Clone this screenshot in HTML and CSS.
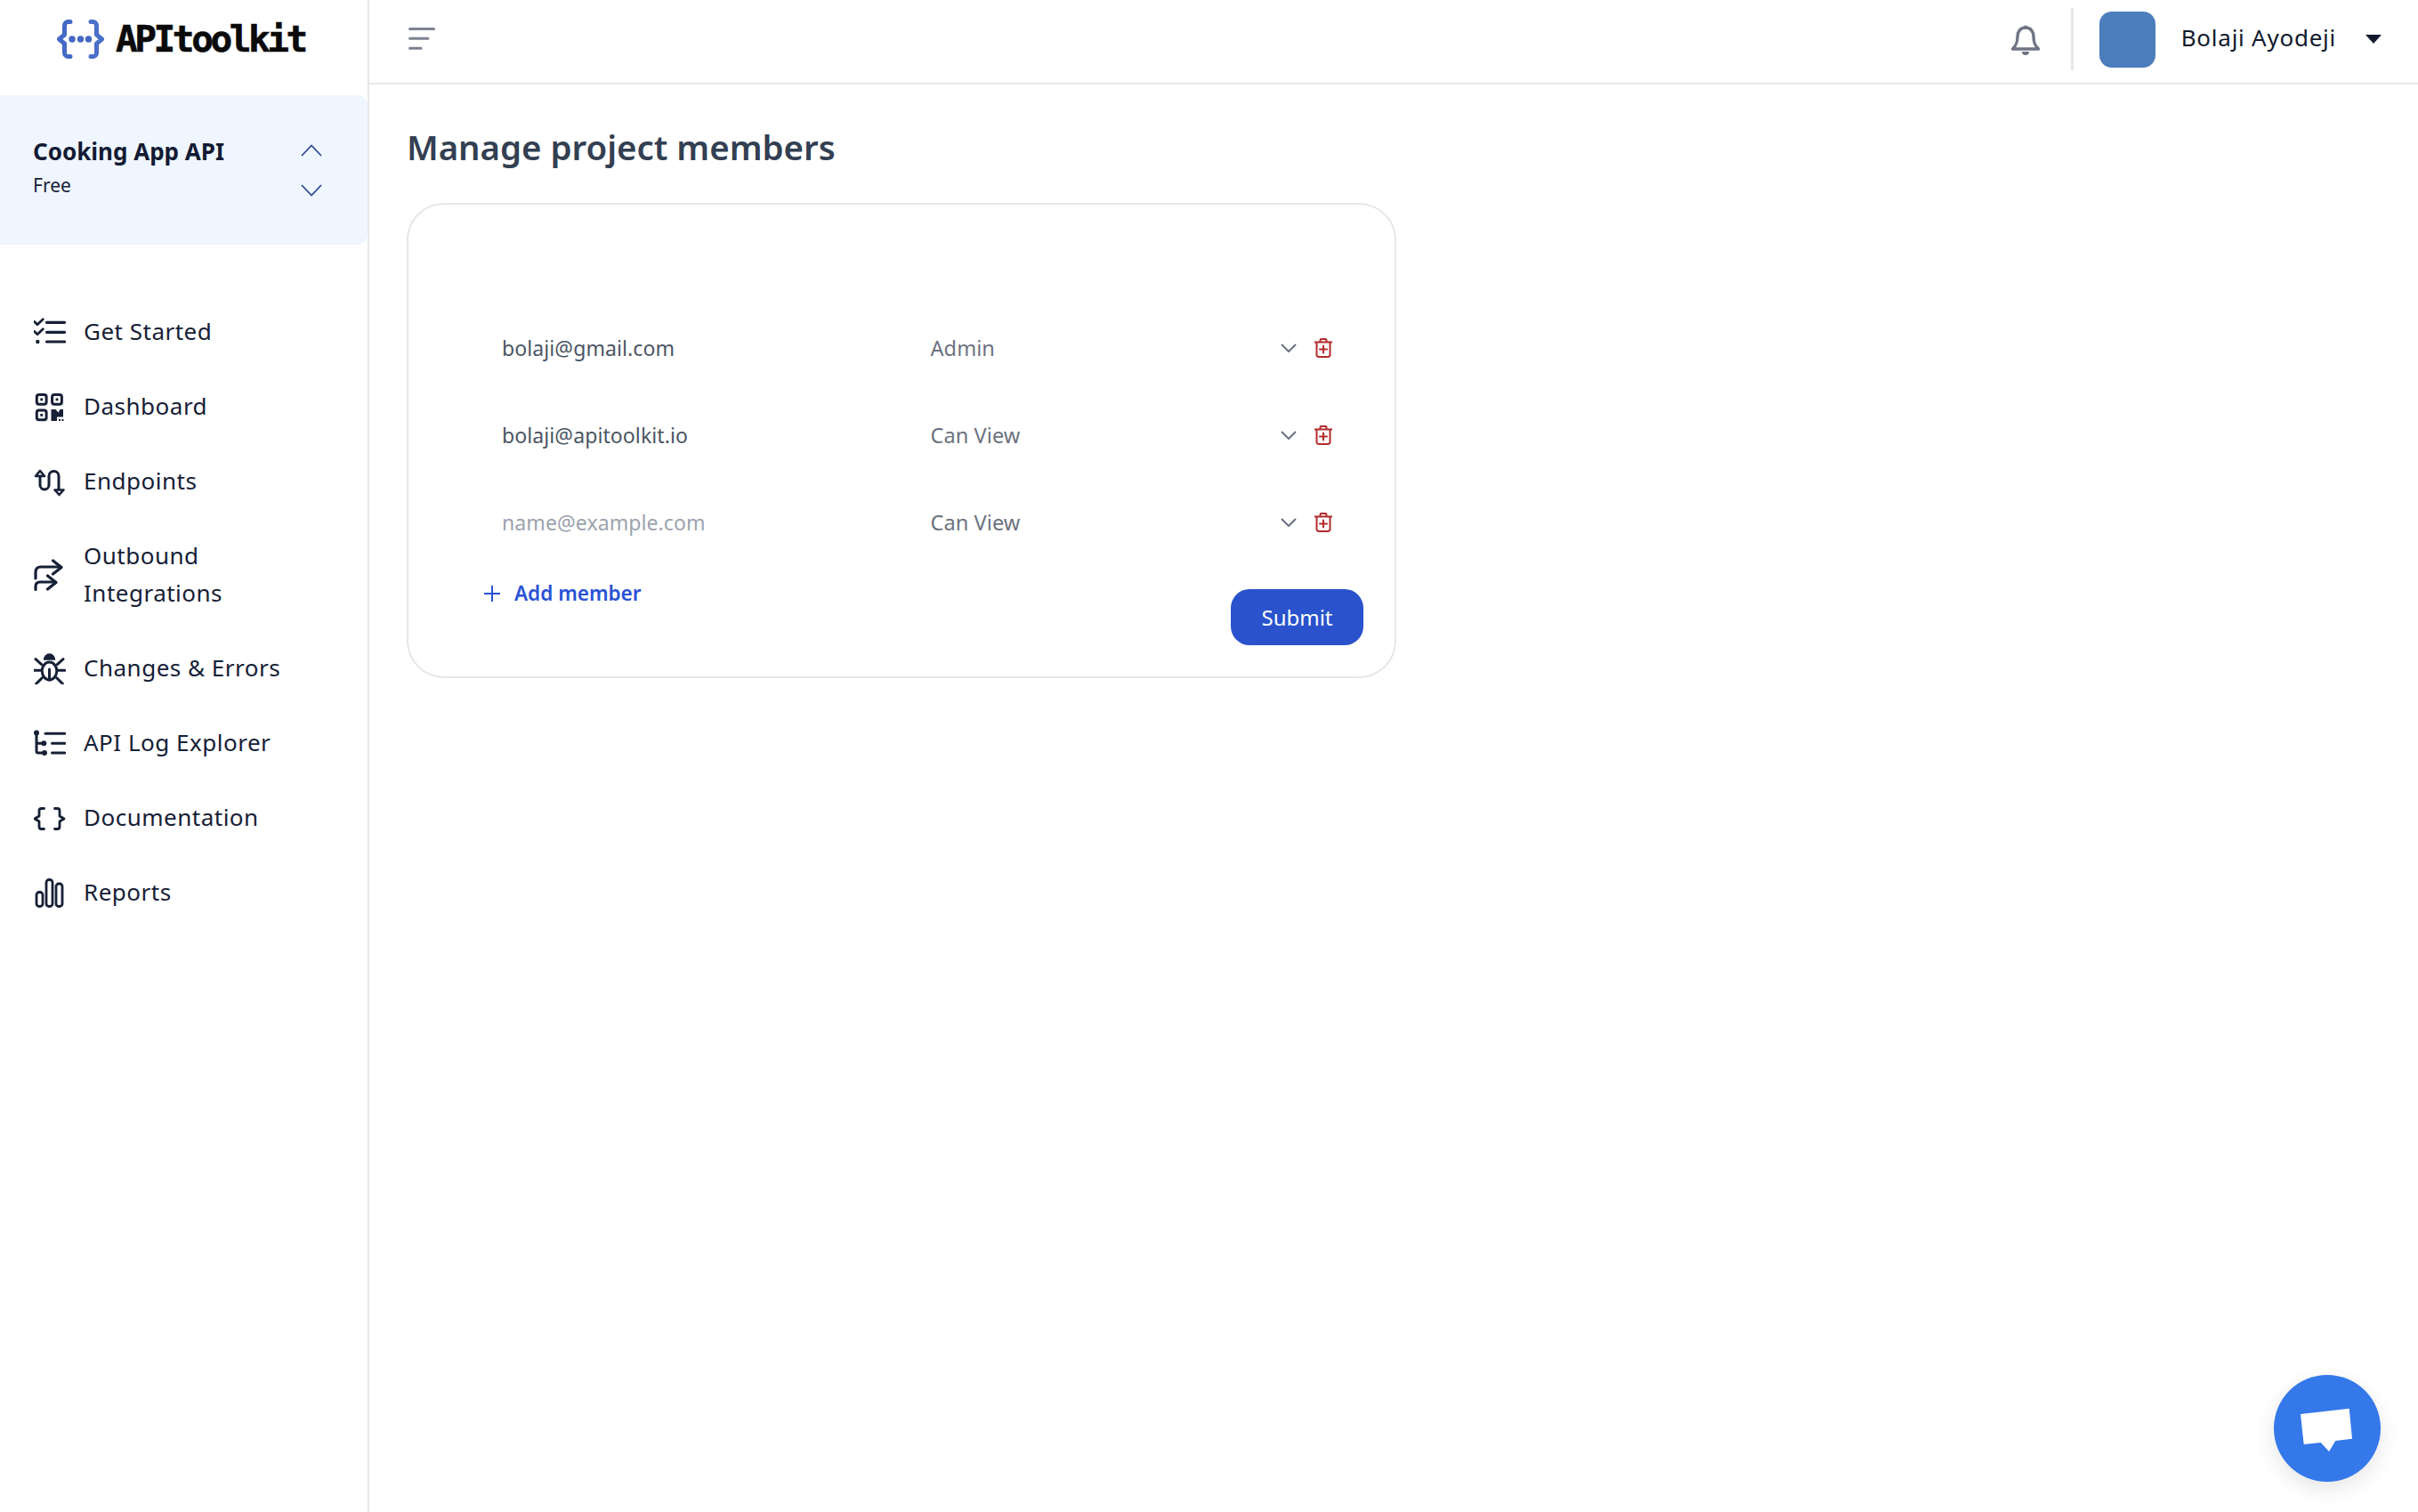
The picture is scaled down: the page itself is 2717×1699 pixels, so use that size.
FILE: index.html
```html
<!DOCTYPE html>
<html lang="en">
<head>
    <meta charset="UTF-8">
    <meta name="viewport" content="width=device-width, initial-scale=1.0">
    <title>Manage project members</title>
    <link rel="stylesheet" href="styles.css">
</head>
<body>
    <aside class="sidebar">
        <div class="logo">
            <svg class="logo-mark" viewBox="0 0 53 44" fill="none">
                <path d="M15 2.500h-2.500a4 4 0 0 0-4 4V17l-6 5 6 5v10.500a4 4 0 0 0 4 4H15" stroke="#4469c6" stroke-width="5" stroke-linecap="round" stroke-linejoin="round"/>
                <path d="M38 2.500h2.500a4 4 0 0 1 4 4V17l6 5-6 5v10.500a4 4 0 0 1-4 4H38" stroke="#4a70ca" stroke-width="5" stroke-linecap="round" stroke-linejoin="round"/>
                <circle cx="17" cy="22" r="3.700" fill="#4267c4"/>
                <circle cx="26.500" cy="22" r="3.700" fill="#4267c4"/>
                <circle cx="35.500" cy="22" r="3.700" fill="#4267c4"/>
            </svg>
            <span class="logo-text">APItoolkit</span>
        </div>

        <div class="project">
            <div class="project-info">
                <div class="project-name">Cooking App API</div>
                <div class="project-plan">Free</div>
            </div>
            <div class="project-arrows">
                <svg viewBox="0 0 24 14" fill="none"><path d="M1 13 12 1.500 23 13" stroke="#2f4a8f" stroke-width="1.800"/></svg>
                <svg viewBox="0 0 24 14" fill="none"><path d="M1 1 12 12.500 23 1" stroke="#2f4a8f" stroke-width="1.800"/></svg>
            </div>
        </div>

        <nav class="nav">
            <a class="nav-item">
                <svg class="nav-icon" viewBox="0 0 36 36">
                    <path d="M14.500 7.300h20M14.500 18.300h20M14.500 29h20" stroke-width="3.200"/>
                    <path d="M.7 6.500 4 9.700 10.300 3.800M.7 17.500 4 20.700 10.300 14.800" stroke-width="2.800"/>
                    <circle class="solid" cx="4.300" cy="29" r="2.200"/>
                </svg>
                <span>Get Started</span>
            </a>
            <a class="nav-item">
                <svg class="nav-icon" viewBox="0 0 36 36">
                    <rect x="3.300" y="4.500" width="10.800" height="10.800" rx="2.500" stroke-width="3"/>
                    <rect x="20.600" y="4.500" width="10.800" height="10.800" rx="2.500" stroke-width="3"/>
                    <rect x="3.300" y="22" width="10.800" height="10.800" rx="2.500" stroke-width="3"/>
                    <rect class="solid" x="7.300" y="8.500" width="2.800" height="2.800"/>
                    <rect class="solid" x="24.600" y="8.500" width="2.800" height="2.800"/>
                    <rect class="solid" x="7.300" y="26" width="2.800" height="2.800"/>
                    <path class="solid" d="M19.500 21h5l3 3.500 2-3.500h3.500v8.500h-7V34h-6.500z"/>
                    <rect class="solid" x="28" y="32" width="2" height="2"/>
                    <rect class="solid" x="31.500" y="32" width="2" height="2"/>
                </svg>
                <span>Dashboard</span>
            </a>
            <a class="nav-item">
                <svg class="nav-icon" viewBox="0 0 36 36">
                    <path d="M7 12V22a5 5 0 0 0 10 0V12a5.500 5.500 0 0 1 11 0V27" stroke-width="3"/>
                    <path d="M2 12 7 6l5 6z" stroke-width="2.600"/>
                    <path d="M23.500 27.500h10L28.500 33z" stroke-width="2.600"/>
                </svg>
                <span>Endpoints</span>
            </a>
            <a class="nav-item">
                <svg class="nav-icon" viewBox="0 0 36 36">
                    <path d="M2 22V15Q2 9 8 9H30" stroke-width="3.200"/>
                    <path d="M21.500 2 31 9.500 21.500 17" stroke-width="3.200"/>
                    <path d="M2 34.500V31Q2 26 7 26H24" stroke-width="3.200"/>
                    <path d="M15.500 19 25 26.500 15.500 34" stroke-width="3.200"/>
                </svg>
                <span>Outbound Integrations</span>
            </a>
            <a class="nav-item">
                <svg class="nav-icon" viewBox="0 0 36 36">
                    <path class="solid" d="M10.800 8.800a6.700 7.500 0 0 1 13.400 0z"/>
                    <ellipse cx="17.500" cy="21" rx="8.300" ry="10" stroke-width="3"/>
                    <path d="M17.500 19V31M2 7.700 8.700 13.700M33 7.700 26.300 13.700M.3 20.300H8M27 20.300H34.700M2.700 35.300 9.300 28.700M32.300 35.300 25.700 28.700" stroke-width="3"/>
                </svg>
                <span>Changes &amp; Errors</span>
            </a>
            <a class="nav-item">
                <svg class="nav-icon" viewBox="0 0 36 36">
                    <path d="M13 7.300H34.700M20.500 18.300H34.700M20.500 29H34.700" stroke-width="3"/>
                    <path d="M3 7V27a2 2 0 0 0 2 2H12M3 18.300H11" stroke-width="3"/>
                    <circle class="solid" cx="3" cy="6.500" r="3"/>
                    <circle class="solid" cx="11.300" cy="18.300" r="3"/>
                    <circle class="solid" cx="12" cy="29" r="3"/>
                </svg>
                <span>API Log Explorer</span>
            </a>
            <a class="nav-item">
                <svg class="nav-icon" viewBox="0 0 36 36">
                    <path d="M11.500 7.500H8.500a2.500 2.500 0 0 0-2.500 2.500V16L1 19l5 3v6a2.500 2.500 0 0 0 2.500 2.500h3" stroke-width="2.800"/>
                    <path d="M23.500 7.500h3a2.500 2.500 0 0 1 2.500 2.500V16L34 19l-5 3v6a2.500 2.500 0 0 1-2.500 2.500h-3" stroke-width="2.800"/>
                </svg>
                <span>Documentation</span>
            </a>
            <a class="nav-item">
                <svg class="nav-icon" viewBox="0 0 36 36">
                    <rect x="3" y="17.500" width="7" height="16" rx="3" stroke-width="2.800"/>
                    <rect x="14" y="3.500" width="7" height="30" rx="3" stroke-width="2.800"/>
                    <rect x="25" y="8" width="7" height="25.500" rx="3" stroke-width="2.800"/>
                </svg>
                <span>Reports</span>
            </a>
        </nav>
    </aside>

    <div class="main">
        <header class="topbar">
            <svg class="menu-icon" viewBox="0 0 30 28">
                <path d="M1.500 2.500H28.500M1.500 13.200H22M1.500 24.200H14"/>
            </svg>
            <div class="topbar-right">
                <svg class="bell" viewBox="0 0 32 36" fill="none">
                    <path d="M16 3C10 3 7 8 7 13c0 8-2.500 11-5.500 14h29C27.500 24 25 21 25 13c0-5-3-10-9-10z" stroke="#6f7484" stroke-width="3.400" stroke-linejoin="round"/>
                    <path d="M12 30a4 4 0 0 0 8 0z" fill="#6f7484"/>
                    <circle cx="16" cy="2.500" r="2" fill="#6f7484"/>
                </svg>
                <div class="divider"></div>
                <div class="avatar"></div>
                <span class="user-name">Bolaji Ayodeji</span>
                <span class="caret"></span>
            </div>
        </header>

        <main class="content">
            <h1 class="title">Manage project members</h1>
            <div class="card">
                <div class="member">
                    <span class="email">bolaji@gmail.com</span>
                    <div class="role"><span>Admin</span>
                        <svg class="chevron" viewBox="0 0 18 10" fill="none"><path d="M1 1 9 9 17 1"/></svg>
                    </div>
                    <svg class="trash" viewBox="0 0 20 22" fill="none">
                        <path d="M0 4.500H20M6.500 4.500V2.500Q6.500 1 8 1H12Q13.500 1 13.500 2.500V4.500M2.500 4.500V18.500Q2.500 21 5 21H15Q17.500 21 17.500 18.500V4.500M10 8.500V16.500M6 12.500H14"/>
                    </svg>
                </div>
                <div class="member">
                    <span class="email">bolaji@apitoolkit.io</span>
                    <div class="role"><span>Can View</span>
                        <svg class="chevron" viewBox="0 0 18 10" fill="none"><path d="M1 1 9 9 17 1"/></svg>
                    </div>
                    <svg class="trash" viewBox="0 0 20 22" fill="none">
                        <path d="M0 4.500H20M6.500 4.500V2.500Q6.500 1 8 1H12Q13.500 1 13.500 2.500V4.500M2.500 4.500V18.500Q2.500 21 5 21H15Q17.500 21 17.500 18.500V4.500M10 8.500V16.500M6 12.500H14"/>
                    </svg>
                </div>
                <div class="member">
                    <span class="email placeholder">name@example.com</span>
                    <div class="role"><span>Can View</span>
                        <svg class="chevron" viewBox="0 0 18 10" fill="none"><path d="M1 1 9 9 17 1"/></svg>
                    </div>
                    <svg class="trash" viewBox="0 0 20 22" fill="none">
                        <path d="M0 4.500H20M6.500 4.500V2.500Q6.500 1 8 1H12Q13.500 1 13.500 2.500V4.500M2.500 4.500V18.500Q2.500 21 5 21H15Q17.500 21 17.500 18.500V4.500M10 8.500V16.500M6 12.500H14"/>
                    </svg>
                </div>
                <div class="card-footer">
                    <a class="add-member">
                        <svg class="plus" viewBox="0 0 18 18" fill="none"><path d="M9 0V18M0 9H18"/></svg>
                        <span>Add member</span>
                    </a>
                    <button class="submit">Submit</button>
                </div>
            </div>
        </main>
    </div>

    <div class="chat">
        <svg viewBox="0 0 120 120"><polygon points="30,44 84.700,37.700 88,71.700 69.300,74 62,86 52.700,76 33.700,78" fill="#fff"/></svg>
    </div>
</body>
</html>
```

FILE: styles.css
```css
* {
    box-sizing: border-box;
}
body {
    margin: 0;
    height: 100vh;
    display: flex;
    overflow: hidden;
    background-color: #fff;
    font-family: "Noto Sans", sans-serif;
    color: #162036;
}

/* sidebar */
.sidebar {
    width: 415px;
    flex-shrink: 0;
    border-right: 2px solid #e5e7eb;
}
.logo {
    height: 107px;
    display: flex;
    align-items: flex-start;
    padding: 22px 0 0 64px;
    gap: 13px;
}
.logo-mark {
    width: 53px;
    height: 44px;
}
.logo-text {
    font-family: "DejaVu Sans Mono", monospace;
    font-weight: 700;
    font-size: 41px;
    line-height: 44px;
    letter-spacing: -3.400px;
    -webkit-text-stroke: 0.6px #0a0a0a;
    color: #0a0a0a;
}
.project {
    height: 168px;
    width: 413px;
    background-color: #eff6ff;
    border-radius: 0 12px 12px 0;
    display: flex;
    align-items: center;
    justify-content: space-between;
    padding: 0 51px 0 37px;
}
.project-info {
    margin-top: -7px;
}
.project-name {
    font-size: 26px;
    font-weight: 700;
    line-height: 36px;
    color: #121a33;
}
.project-plan {
    font-size: 21px;
    line-height: 30px;
    margin-top: 5px;
}
.project-arrows {
    display: flex;
    flex-direction: column;
    gap: 31px;
}
.project-arrows svg {
    display: block;
    width: 24px;
    height: 14px;
}
.nav {
    margin-top: 56px;
    display: flex;
    flex-direction: column;
}
.nav-item {
    display: flex;
    align-items: center;
    gap: 20px;
    padding: 20px 38px 22px;
    font-size: 26px;
    line-height: 42px;
    letter-spacing: 0.5px;
}
.nav-icon {
    width: 36px;
    height: 36px;
    margin-top: 2px;
    flex-shrink: 0;
    fill: none;
    stroke: #162036;
    stroke-linecap: round;
    stroke-linejoin: round;
}
.nav-icon .solid {
    fill: #162036;
    stroke: none;
}

/* top bar */
.main {
    flex: 1;
    min-width: 0;
    display: flex;
    flex-direction: column;
}
.topbar {
    height: 95px;
    flex-shrink: 0;
    border-bottom: 2px solid #e5e7eb;
    display: flex;
    align-items: center;
    justify-content: space-between;
    padding: 0 41px 5px 44px;
}
.menu-icon {
    width: 30px;
    height: 28px;
    fill: none;
    stroke: #7c8291;
    stroke-width: 3;
    stroke-linecap: round;
}
.topbar-right {
    display: flex;
    align-items: center;
}
.bell {
    width: 32px;
    height: 36px;
    margin-top: 3px;
}
.divider {
    width: 3px;
    height: 70px;
    background-color: #e5e7eb;
    margin: 0 29px 0 35px;
}
.avatar {
    width: 63px;
    height: 63px;
    border-radius: 14px;
    background-color: #4c7dbc;
}
.user-name {
    font-size: 26px;
    line-height: 36px;
    letter-spacing: 0.750px;
    margin: -4px 33px 0 29px;
    color: #111a2e;
}
.caret {
    width: 0;
    height: 0;
    border-left: 9px solid transparent;
    border-right: 9px solid transparent;
    border-top: 10px solid #111a2e;
}

/* content */
.content {
    padding: 0 42px;
}
.title {
    margin: 0;
    padding-top: 44px;
    height: 133px;
    font-size: 38.400px;
    line-height: 52px;
    font-weight: 600;
    color: #333f52;
}
.card {
    width: 1112px;
    height: 534px;
    border: 2px solid #e5e7eb;
    border-radius: 42px;
    padding: 112px 70px 0 0;
}
.member {
    height: 98px;
    display: flex;
    align-items: center;
    padding-left: 105px;
    font-size: 23px;
    letter-spacing: 0.1px;
}
.email {
    width: 482px;
    margin-top: -1px;
    color: #4b5563;
}
.email.placeholder {
    color: #9ca3af;
}
.role {
    width: 412px;
    display: flex;
    align-items: center;
    justify-content: space-between;
    color: #6b7280;
    font-size: 23.500px;
}
.role span {
    margin-top: -1px;
}
.chevron {
    width: 18px;
    height: 10px;
    stroke: #6b7080;
    stroke-width: 2;
}
.trash {
    width: 20px;
    height: 22px;
    margin-left: 20px;
    stroke: #b32b2b;
    stroke-width: 2;
    stroke-linecap: round;
}
.card-footer {
    display: flex;
    align-items: flex-start;
    justify-content: space-between;
    margin-right: -35px;
    padding-left: 85px;
}
.add-member {
    display: flex;
    align-items: center;
    gap: 16px;
    margin-top: 10px;
    font-size: 22.500px;
    line-height: 42px;
    font-weight: 600;
    color: #2952d6;
}
.plus {
    width: 18px;
    height: 18px;
    stroke: #2952d6;
    stroke-width: 2;
}
.submit {
    width: 149px;
    height: 63px;
    margin-top: 26px;
    border: none;
    border-radius: 21px;
    background-color: #2952cc;
    color: #fff;
    font-family: inherit;
    font-size: 24px;
    font-weight: 400;
}

/* chat widget */
.chat {
    position: fixed;
    left: 2555px;
    top: 1545px;
    width: 120px;
    height: 120px;
    border-radius: 50%;
    background-color: #3478ea;
    box-shadow: 0 8px 24px rgba(0, 0, 0, 0.1);
}
.chat svg {
    display: block;
    width: 120px;
    height: 120px;
}
```
